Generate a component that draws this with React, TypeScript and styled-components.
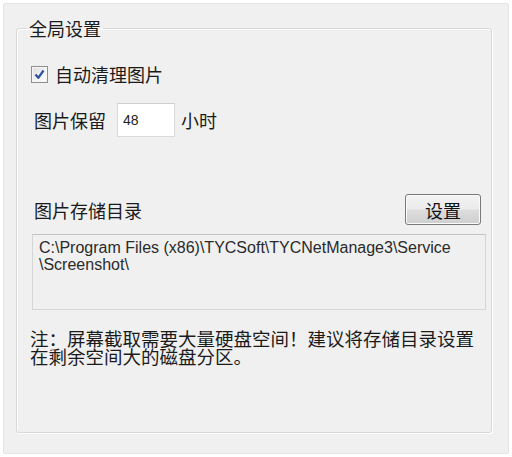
import React, { useState } from "react";
import styled, { createGlobalStyle } from "styled-components";

const GlobalStyle = createGlobalStyle`
  html, body {
    margin: 0;
    padding: 0;
    background: #ffffff;
  }
  body {
    font-family: "Noto Sans CJK SC", "Liberation Sans", sans-serif;
    color: #1b1b1b;
  }
`;

const Window = styled.div`
  box-sizing: border-box;
  margin: 3px 0 0 3px;
  width: 506px;
  height: 451px;
  padding: 13px 16px 0 12px;
  background: #f0f0f0;
  border: 1px solid #e4e4e4;
  border-radius: 2px;
`;

const Group = styled.fieldset`
  box-sizing: border-box;
  margin: 0;
  padding: 0 0 0 10px;
  height: 416px;
  border: 1px solid #d9d9d9;
  border-radius: 3px;
  box-shadow: inset 1px 1px 0 #ffffff, 1px 1px 0 #ffffff;
`;

const Legend = styled.legend`
  margin: 0;
  padding: 0 2px;
  font-size: 18px;
  line-height: 22px;
`;

const Row = styled.div<{ $top: number; $left?: number; $right?: number }>`
  display: flex;
  align-items: center;
  margin-top: ${(p) => p.$top}px;
  padding-left: ${(p) => p.$left ?? 0}px;
  padding-right: ${(p) => p.$right ?? 0}px;
`;

const Label = styled.span<{ $gap?: number }>`
  font-size: 18px;
  line-height: 22px;
  margin-right: ${(p) => p.$gap ?? 0}px;
`;

const CheckBox = styled.span<{ $on: boolean }>`
  box-sizing: border-box;
  display: inline-flex;
  align-items: center;
  justify-content: center;
  width: 17px;
  height: 17px;
  margin-right: 7px;
  border: 1px solid #8f8f8f;
  background: linear-gradient(135deg, #dcdcdc 0%, #f4f4f4 60%, #ffffff 100%);
  box-shadow: inset 0 0 0 1px #f6f6f6;
  cursor: pointer;
  svg {
    visibility: ${(p) => (p.$on ? "visible" : "hidden")};
  }
`;

const NumberBox = styled.input`
  box-sizing: border-box;
  width: 58px;
  height: 34px;
  margin-right: 6px;
  padding: 0 0 0 5px;
  border: 1px solid #dadada;
  border-top-color: #cfcfcf;
  background: #ffffff;
  font-family: "Liberation Sans", sans-serif;
  font-size: 14px;
  color: #222;
  outline: none;
`;

const Spacer = styled.div`
  flex: 1;
`;

const Button = styled.button`
  box-sizing: border-box;
  width: 76px;
  height: 31px;
  padding: 0;
  border: 1px solid #7a7a7a;
  border-radius: 3px;
  background: linear-gradient(#f3f3f3 0%, #ebebeb 48%, #dddddd 52%, #cfcfcf 100%);
  box-shadow: inset 0 0 0 1px #fbfbfb;
  font-family: "Noto Sans CJK SC", sans-serif;
  font-size: 18px;
  line-height: 22px;
  color: #111;
  cursor: pointer;
`;

const PathBox = styled.textarea`
  box-sizing: border-box;
  display: block;
  width: 454px;
  height: 76px;
  margin: 9px 0 0 5px;
  padding: 4px 8px 4px 6px;
  resize: none;
  border: 1px solid #d6d6d6;
  border-top-color: #c4c4c4;
  background: #f0f0f0;
  font-family: "Liberation Sans", sans-serif;
  font-size: 16px;
  line-height: 17px;
  color: #2a2a2a;
  white-space: pre-wrap;
  outline: none;
  overflow: hidden;
`;

const Note = styled.p`
  margin: 19px 0 0 3px;
  width: 460px;
  font-size: 18.5px;
  line-height: 18px;
`;

const screenshotDir = "C:\\Program Files (x86)\\TYCSoft\\TYCNetManage3\\Service\n\\Screenshot\\";

const App: React.FC = () => {
  const [autoClean, setAutoClean] = useState<boolean>(true);
  const [hours, setHours] = useState<string>("48");

  return (
    <>
      <GlobalStyle />
      <Window>
        <Group>
          <Legend>全局设置</Legend>
          <Row $top={24} $left={4}>
            <CheckBox $on={autoClean} onClick={() => setAutoClean(!autoClean)}>
              <svg width="11" height="11" viewBox="0 0 11 11">
                <path d="M1.5 5.5 L4.3 8.8 L9.5 1.5" fill="none" stroke="#2c4f9e" strokeWidth="2.2" strokeLinejoin="round" />
              </svg>
            </CheckBox>
            <Label>自动清理图片</Label>
          </Row>
          <Row $top={18} $left={7}>
            <Label $gap={11}>图片保留</Label>
            <NumberBox value={hours} onChange={(e) => setHours(e.target.value)} />
            <Label>小时</Label>
          </Row>
          <Row $top={57} $left={7} $right={10}>
            <Label>图片存储目录</Label>
            <Spacer />
            <Button>设置</Button>
          </Row>
          <PathBox readOnly value={screenshotDir} />
          <Note>注：屏幕截取需要大量硬盘空间！建议将存储目录设置在剩余空间大的磁盘分区。</Note>
        </Group>
      </Window>
    </>
  );
};

export default App;
